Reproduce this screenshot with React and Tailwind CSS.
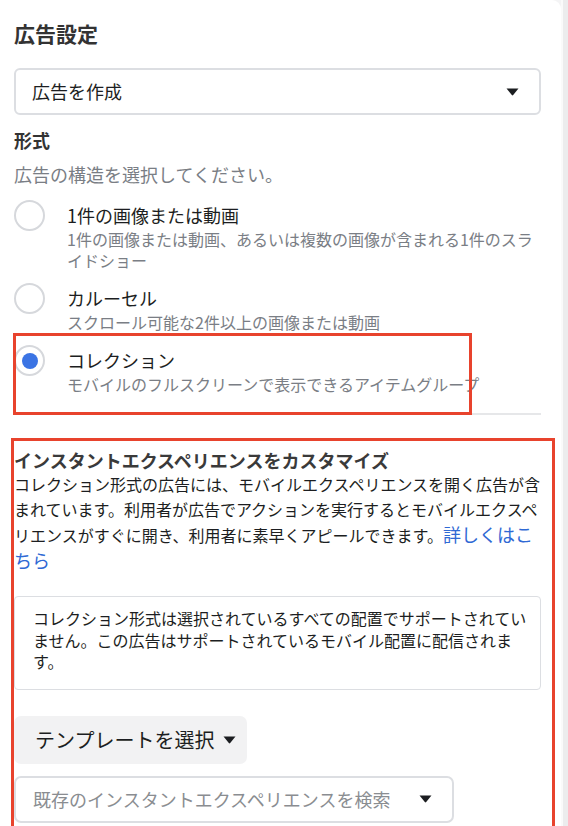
const formatOptions = [
  {
    id: "single",
    label: "1件の画像または動画",
    description: "1件の画像または動画、あるいは複数の画像が含まれる1件のスライドショー",
  },
  {
    id: "carousel",
    label: "カルーセル",
    description: "スクロール可能な2件以上の画像または動画",
  },
  {
    id: "collection",
    label: "コレクション",
    description: "モバイルのフルスクリーンで表示できるアイテムグループ",
  },
];

const Caret = ({ className = "" }) => (
  <svg width="13" height="8" viewBox="0 0 13 8" className={className}>
    <path d="M0.5 0.5 H12.5 L7.2 7 Q6.5 7.8 5.8 7 Z" fill="#1c1e21" />
  </svg>
);

const RadioOption = ({ option, checked }) => (
  <div className="relative flex items-start">
    <div className="flex h-[31px] w-[31px] shrink-0 items-center justify-center rounded-full border-2 border-[#d6d8dc] bg-white">
      {checked && <div className="h-[16px] w-[16px] rounded-full bg-[#3b74e4]" />}
    </div>
    <div className="ml-[22px] pt-[3px]">
      <div className="text-[18px] leading-[24px] text-[#1c1e21]">{option.label}</div>
      <div className="mt-[2px] text-[16px] leading-[21px] text-[#7a7e85]">
        {option.description}
      </div>
    </div>
    {checked && (
      <div className="pointer-events-none absolute -left-[1px] -top-[12px] h-[82px] w-[459px] border-[3px] border-[#e8432d]" />
    )}
  </div>
);

export default function App() {
  return (
    <div className="flex h-[826px] w-full overflow-hidden bg-[#f4f4f5] font-['Noto_Sans_CJK_JP','Liberation_Sans',sans-serif]">
      <div className="w-[561px] shrink-0 rounded-tr-[9px] bg-white pl-[14px] pr-[20px]">
        <h2 className="pt-[19px] text-[21px] font-bold leading-[28px] text-[#333]">広告設定</h2>

        <div className="mt-[21px] flex h-[47px] items-center justify-between rounded-[6px] border-2 border-[#dcdee2] pl-[16px] pr-[20px]">
          <span className="text-[18px] text-[#1c1e21]">広告を作成</span>
          <Caret />
        </div>

        <div className="mt-[13px] text-[18px] font-bold leading-[24px] text-[#333]">形式</div>
        <div className="mt-[10px] text-[18px] leading-[24px] text-[#7a7e85]">
          広告の構造を選択してください。
        </div>

        <div className="mt-[14px] flex flex-col gap-[12px]">
          {formatOptions.map((option) => (
            <RadioOption key={option.id} option={option} checked={option.id === "collection"} />
          ))}
        </div>

        <div className="mt-[18px] h-[2px] bg-[#e6e7e9]" />

        {/* instant experience */}
        <div className="-ml-[3px] -mr-[14px] mt-[23px] h-[400px] border-[3px] border-[#e8432d]">
          <div className="pt-[7px] text-[18px] font-bold leading-[24px] text-[#3a3a3a]">
            インスタントエクスペリエンスをカスタマイズ
          </div>
          <p className="pr-[8px] text-[16px] leading-[25px] text-[#1c1e21]">
            コレクション形式の広告には、モバイルエクスペリエンスを開く広告が含まれています。利用者が広告でアクションを実行するとモバイルエクスペリエンスがすぐに開き、利用者に素早くアピールできます。
            <a href="#" className="text-[18px] leading-[24px] text-[#2f69d4]">
              詳しくはこちら
            </a>
          </p>

          <div className="mt-[22px] w-[527px] rounded-[4px] border border-[#dcdee2] pb-[16px] pl-[18px] pr-[7px] pt-[11px] text-[16px] leading-[21.5px] text-[#1c1e21]">
            コレクション形式は選択されているすべての配置でサポートされていません。この広告はサポートされているモバイル配置に配信されます。
          </div>

          <button className="mt-[26px] flex h-[48px] w-[233px] items-center rounded-[7px] bg-[#f2f2f3] pl-[21px] text-[20px] text-[#1c1e21]">
            テンプレートを選択
            <Caret className="ml-[9px]" />
          </button>

          <div className="mt-[12px] flex h-[47px] w-[440px] items-center justify-between rounded-[7px] border-2 border-[#dcdee2] pl-[17px] pr-[20px]">
            <span className="text-[18px] text-[#8a8d91]">既存のインスタントエクスペリエンスを検索</span>
            <Caret />
          </div>
        </div>
      </div>
      <div className="flex-1 border-l-[2px] border-[#fafafa] bg-[#ececed]" />
    </div>
  );
}
